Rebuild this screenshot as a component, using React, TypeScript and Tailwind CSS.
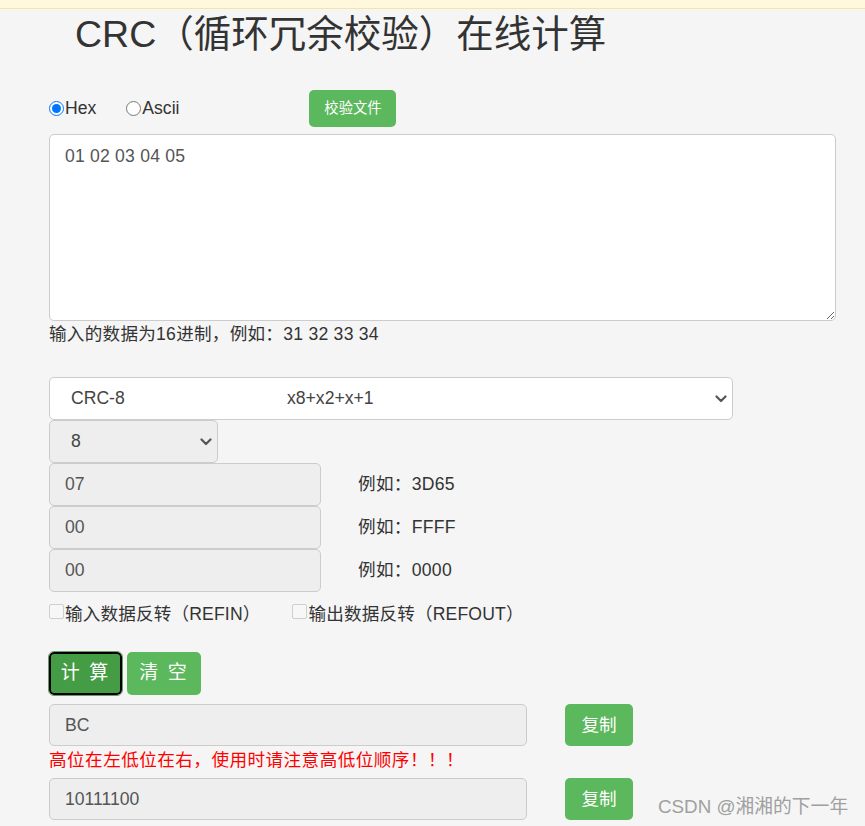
import React from "react";

const FONT = '"Liberation Sans", "Noto Sans CJK SC", sans-serif';

function Chevron() {
  return (
    <svg width="12" height="8" viewBox="0 0 12 8" className="shrink-0">
      <path d="M1.5 1.5 L6 6 L10.5 1.5" fill="none" stroke="#555" strokeWidth="2.2" strokeLinecap="round" strokeLinejoin="round" />
    </svg>
  );
}

function Field({ value, width, label }: { value: string; width: string; label?: string }) {
  return (
    <div className="flex items-center">
      <input
        defaultValue={value}
        className={`${width} h-[43px] rounded-[5px] border border-[#cccccc] bg-[#eeeeee] px-[15px] text-[17.6px] text-[#555] outline-none`}
      />
      {label && <span className="ml-[37px] text-[17.6px] tracking-[0.3px] text-[#333]">{label}</span>}
    </div>
  );
}

function GreenBtn({ children, className = "" }: { children: React.ReactNode; className?: string }) {
  return (
    <button className={`rounded-[5px] bg-[#5cb85c] text-white ${className}`}>{children}</button>
  );
}

function Check({ label }: { label: string }) {
  return (
    <label className="flex items-start">
      <span className="mt-[1px] block h-[15px] w-[15px] rounded-[2px] border border-[#cfcfcf] bg-[#f7f7f7]" />
      <span className="ml-[1px] leading-[22px] tracking-[0.15px]">{label}</span>
    </label>
  );
}

export default function App() {
  return (
    <div className="min-h-[826px] w-full bg-[#f5f5f5] text-[#333]" style={{ fontFamily: FONT }}>
      <div className="h-[9px] border-b border-[#f5e4a4] bg-[#fff8dc]" />
      <div className="pl-[49px]">
        <h1 className="mt-[4px] ml-[26px] h-[42px] text-[37.5px] leading-[42px] text-[#333]">CRC（循环冗余校验）在线计算</h1>

        <div className="mt-[35px] flex h-[37px] items-center text-[17.6px]">
          <label className="flex items-center">
            <input type="radio" name="m" defaultChecked className="m-0 h-[15px] w-[15px]" />
            <span className="ml-[1px]">Hex</span>
          </label>
          <label className="ml-[30px] flex items-center">
            <input type="radio" name="m" className="m-0 h-[15px] w-[15px]" />
            <span className="ml-[1px]">Ascii</span>
          </label>
          <GreenBtn className="ml-[130px] h-[37px] w-[87px] text-[14.3px]">校验文件</GreenBtn>
        </div>

        <textarea
          defaultValue="01 02 03 04 05"
          className="mt-[7px] block h-[187px] w-[787px] rounded-[5px] border border-[#cccccc] bg-white px-[15px] py-[8px] text-[17.6px] tracking-[0.2px] text-[#555] outline-none"
        />
        <div className="h-[26px] text-[17.6px] leading-[26px] tracking-[0.25px]">输入的数据为16进制，例如：31 32 33 34</div>

        <div className="mt-[30px] flex h-[43px] w-[684px] items-center justify-between rounded-[5px] border border-[#cccccc] bg-white pl-[21px] pr-[5px] text-[17.6px] text-[#444]">
          <div className="flex">
            <span className="w-[216px]">CRC-8</span>
            <span>x8+x2+x+1</span>
          </div>
          <Chevron />
        </div>
        <div className="flex h-[43px] w-[169px] items-center justify-between rounded-[5px] border border-[#cccccc] bg-[#eeeeee] pl-[21px] pr-[5px] text-[17.6px] text-[#444]">
          <span>8</span>
          <Chevron />
        </div>
        <Field value="07" width="w-[272px]" label="例如：3D65" />
        <Field value="00" width="w-[272px]" label="例如：FFFF" />
        <Field value="00" width="w-[272px]" label="例如：0000" />

        <div className="mt-[11px] flex items-center text-[17.6px]">
          <Check label="输入数据反转（REFIN）" />
          <div className="w-[32px]" />
          <Check label="输出数据反转（REFOUT）" />
        </div>

        <div className="mt-[27px] flex gap-[5px]">
          <button className="h-[43px] w-[73px] rounded-[5px] border-2 border-black bg-[#449d44] text-[19px] tracking-[2px] text-white outline outline-1 outline-[#6d9a6d]">
            计 算
          </button>
          <GreenBtn className="h-[43px] w-[74px] text-[19px] tracking-[2px]">清 空</GreenBtn>
        </div>

        <div className="mt-[9px] flex items-center">
          <input
            defaultValue="BC"
            className="h-[42px] w-[478px] rounded-[5px] border border-[#cccccc] bg-[#eeeeee] px-[15px] text-[17.6px] text-[#555] outline-none"
          />
          <GreenBtn className="ml-[38px] h-[42px] w-[68px] text-[17.6px]">复制</GreenBtn>
        </div>
        <div className="h-[31px] text-[17.6px] leading-[28px] tracking-[0.45px] text-[#ff0000]">高位在左低位在右，使用时请注意高低位顺序！！！</div>
        <div className="flex items-center">
          <input
            defaultValue="10111100"
            className="h-[42px] w-[478px] rounded-[5px] border border-[#cccccc] bg-[#eeeeee] px-[15px] text-[17.6px] text-[#555] outline-none"
          />
          <GreenBtn className="ml-[38px] h-[42px] w-[68px] text-[17.6px]">复制</GreenBtn>
          <span className="ml-[25px] mt-[16px] text-[18.8px] text-[#a0a0a0]">CSDN @湘湘的下一年</span>
        </div>
      </div>
    </div>
  );
}
